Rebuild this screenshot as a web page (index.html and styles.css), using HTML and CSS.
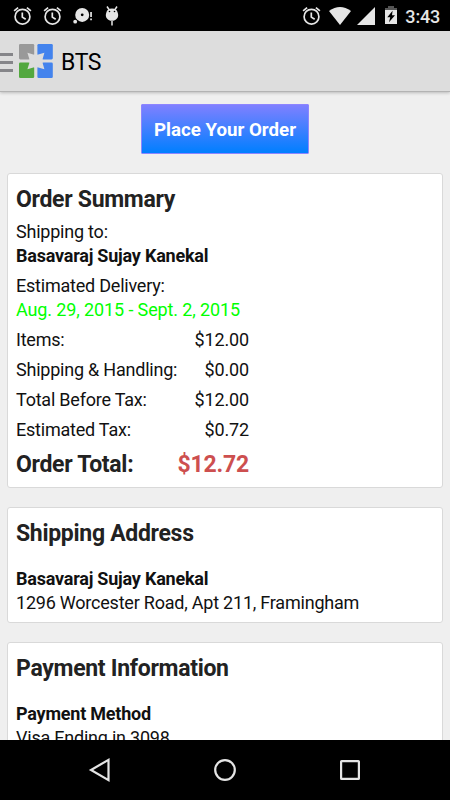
FILE: index.html
```html
<!DOCTYPE html>
<html lang="en">
<head>
<meta charset="utf-8">
<title>BTS</title>
<link rel="stylesheet" href="styles.css">
</head>
<body>
<svg class="defs" width="0" height="0">
  <symbol id="alarm" viewBox="0 0 20 20">
    <g fill="none" stroke="#e6e6e6" stroke-width="1.7">
      <circle cx="9.5" cy="10.7" r="7.4"/>
      <path d="M9.3 6.5v4.6l3.4 2.2M1.1 4.9L5.1 1.6M17.9 4.9l-4-3.3"/>
    </g>
  </symbol>
</svg>
<div class="screen">
  <div class="status">
    <div class="status-left">
      <svg width="20" height="20"><use href="#alarm"/></svg>
      <svg width="20" height="20"><use href="#alarm"/></svg>
      <svg width="20" height="20" viewBox="0 0 20 20" fill="#e6e6e6">
        <path fill-rule="evenodd" d="M9.2 1.9a7 7 0 1 1 0 14a7 7 0 1 1 0-14zM9.2 7.4a1.4 1.4 0 1 0 0 2.8a1.4 1.4 0 1 0 0-2.8z"/>
        <circle cx="2.2" cy="15.7" r="1.9"/>
        <path d="M17.2 6h1.7v5h-1.7zM17.2 12.5h1.7v1.8h-1.7z"/>
      </svg>
      <svg width="16" height="20" viewBox="0 0 16 20">
        <path d="M2.2 7A5.9 5.4 0 0 1 13.8 7C15.4 11.5 12 14.8 8 14.8S.6 11.5 2.2 7z" fill="#e6e6e6"/>
        <path d="M3 .5l2 3M13 .5l-2 3M8 15v4.5" stroke="#e6e6e6" stroke-width="1.5"/>
        <circle cx="5.5" cy="5.5" r=".8"/><circle cx="10.5" cy="5.5" r=".8"/>
      </svg>
    </div>
    <div class="status-right">
      <svg width="20" height="20"><use href="#alarm"/></svg>
      <svg class="wifi" width="22" height="18" viewBox="0 0 22 18"><path d="M0 4Q11-4 22 4L11 18z" fill="#e6e6e6"/></svg>
      <svg class="signal" width="18" height="18" viewBox="0 0 18 18"><path d="M18 0v18H0z" fill="#e6e6e6"/></svg>
      <svg class="battery" width="12" height="18" viewBox="0 0 12 18">
        <path d="M0 2h3V0h6v2h3v2H0z" fill="#555"/><path d="M0 4h12v14H0z" fill="#e6e6e6"/>
        <path d="M7.6 4.8L2.3 11.3h2.9l-1.2 5L10 9.3H7z"/>
      </svg>
      <span class="clock">3:43</span>
    </div>
  </div>
  <header class="appbar">
    <div class="burger"><i></i><i></i><i></i></div>
    <svg class="logo" width="34" height="34" viewBox="0 0 34 34">
      <rect width="15.2" height="15.4" rx="1.3" fill="#999"/>
      <rect x="18.4" width="15.4" height="15.4" rx="1.3" fill="#4383ed"/>
      <rect y="18.6" width="15.2" height="15.4" rx="1.3" fill="#53a83f"/>
      <rect x="18.4" y="18.6" width="15.4" height="15.4" rx="1.3" fill="#4383ed"/>
      <path d="M8.4 8.7L15.2 10.8L16.8 9L18.4 10.8L25.4 8.7L23.5 15.4L27 17L23.5 18.6L25.4 25.3L18.4 23.2L16.8 25L15.2 23.2L8.4 25.3L10.5 18.6L7 17L10.5 15.4z" fill="#ddd"/>
    </svg>
    <h1 class="title">BTS</h1>
  </header>
  <main class="content">
    <button class="order">Place Your Order</button>
    <section class="card summary">
      <h2>Order Summary</h2>
      <div class="block"><p>Shipping to:</p><p class="name">Basavaraj Sujay Kanekal</p></div>
      <div class="block"><p>Estimated Delivery:</p><p class="date">Aug. 29, 2015 - Sept. 2, 2015</p></div>
      <div class="row"><span>Items:</span><span class="amount">$12.00</span></div>
      <div class="row"><span>Shipping &amp; Handling:</span><span class="amount">$0.00</span></div>
      <div class="row"><span>Total Before Tax:</span><span class="amount">$12.00</span></div>
      <div class="row"><span>Estimated Tax:</span><span class="amount">$0.72</span></div>
      <div class="row total"><span>Order Total:</span><span class="price">$12.72</span></div>
    </section>
    <section class="card address">
      <h2>Shipping Address</h2>
      <p class="name">Basavaraj Sujay Kanekal</p>
      <p>1296 Worcester Road, Apt 211, Framingham</p>
    </section>
    <section class="card payment">
      <h2>Payment Information</h2>
      <p class="name">Payment Method</p>
      <p>Visa Ending in 3098</p>
    </section>
  </main>
  <nav class="navbar">
    <svg width="22" height="26" viewBox="0 0 22 26"><path d="M20.5 2.8v20.4L3 13z"/></svg>
    <svg width="22" height="22" viewBox="0 0 22 22"><circle cx="11" cy="11" r="9.8"/></svg>
    <svg width="20" height="20" viewBox="0 0 20 20"><rect x="1.1" y="1.1" width="17.8" height="17.8" rx=".5"/></svg>
  </nav>
</div>
</body>
</html>
```
FILE: styles.css
```css
* { box-sizing: border-box; }
body { margin: 0; font-family: Roboto, "Liberation Sans", sans-serif; font-size: 18px; line-height: 24px; color: #111; }
h1, h2, p { margin: 0; }
svg { display: block; flex: none; }
.defs { position: absolute; }
.screen { display: flex; flex-direction: column; width: 450px; height: 800px; overflow: hidden; background: #efefef; }
.status { display: flex; justify-content: space-between; flex: none; height: 31px; padding: 6px 10px 0 13px; background: #000; }
.status-left { display: flex; gap: 10px; }
.status-left svg:last-child { margin-left: 1px; }
.status-right { display: flex; }
.wifi { margin: 1px 0 0 7px; }
.signal { margin: 1px 0 0 6px; }
.battery { margin: 0 0 0 10px; }
.clock { margin-left: 8px; line-height: 21px; font-weight: 500; font-size: 18px; letter-spacing: -.2px; color: #e6e6e6; }
.appbar { display: flex; align-items: center; flex: none; height: 61px; padding-bottom: 0; background: #ddd; border-bottom: 1px solid #b3b3b3; box-shadow: 0 1px 3px rgba(0,0,0,.22); position: relative; }
.burger { display: grid; gap: 5px; width: 13px; margin: 2px 6px 0 0; }
.burger i { height: 3px; background: #858589; }
.title { margin: 3px 0 0 8px; font-size: 23px; font-weight: 400; letter-spacing: -.4px; color: #000; }
.content { flex: 1; min-height: 0; overflow: hidden; padding: 12px 7px 0; }
.order { display: block; width: 168px; height: 50px; margin: 0 auto 19px; padding: 2px 0 0; border: 1px solid #8d85ff; border-radius: 1px; background: linear-gradient(#7f80ff, #007fff); color: #fff; font: 700 18.7px Roboto, sans-serif; white-space: nowrap; }
.card { border: 1px solid #d9d9d9; border-radius: 3px; background: #fff; padding: 11px 9px 0 8px; white-space: nowrap; letter-spacing: -.22px; }
.card h2 { font-size: 23px; line-height: 30px; font-weight: 700; letter-spacing: -.3px; color: #222; }
.name { font-weight: 700; }
.summary { height: 315px; margin-bottom: 18.5px; }
.block { margin-top: 6px; }
.summary h2 + .block { margin-top: 5px; }
.date { color: #0f0; letter-spacing: -.12px; }
.row { display: flex; justify-content: space-between; width: 233px; margin-top: 6px; }
.row .amount { letter-spacing: -.15px; }
.row.total { margin-top: 8px; font-size: 23px; line-height: 30px; font-weight: 700; letter-spacing: -.3px; color: #222; }
.row .price { color: #cd4f4f; letter-spacing: -.2px; }
.address { height: 116.5px; margin-bottom: 19px; }
.address h2 { margin-bottom: 18px; }
.payment { height: 180px; }
.payment h2 { margin-bottom: 18px; }
.navbar { display: flex; align-items: center; justify-content: space-between; flex: none; height: 60px; padding: 0 90px 0 88px; background: #000; }
.navbar svg { fill: none; stroke: #e4e4e4; stroke-width: 2.2; }
```
